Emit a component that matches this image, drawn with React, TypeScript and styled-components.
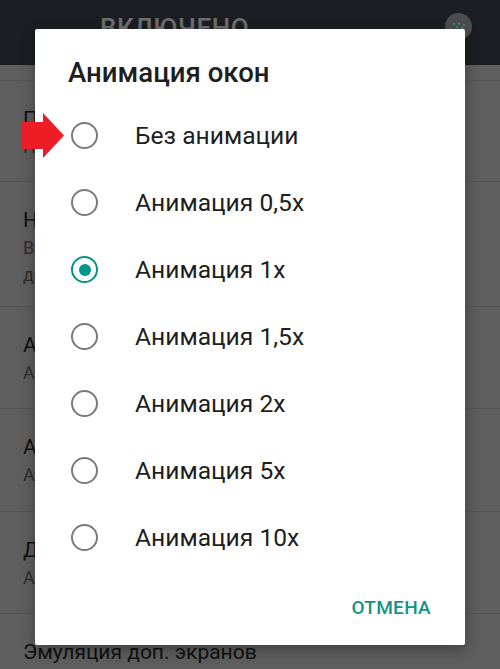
import styled, { createGlobalStyle } from 'styled-components';

const GlobalStyle = createGlobalStyle`
  html, body {
    margin: 0;
    padding: 0;
    background: #5e5e5e;
    font-family: Roboto, "Noto Sans", sans-serif;
  }
`;

const Screen = styled.div`
  position: relative;
  width: 500px;
  height: 669px;
  overflow: hidden;
  background: #5e5e5e;
`;

const TopBar = styled.div`
  height: 65px;
  background: #1b1f23;
  display: flex;
  align-items: flex-start;
  justify-content: space-between;
  padding: 0 28px 0 100px;
  box-sizing: border-box;
`;

const BarTitle = styled.div`
  color: #6e6e6e;
  font-size: 26px;
  font-weight: 500;
  letter-spacing: 0.6px;
  margin-top: 13px;
`;

const Toggle = styled.div`
  width: 27px;
  height: 27px;
  margin-top: 13px;
  border-radius: 50%;
  background: #4b4d4f;
  display: flex;
  align-items: center;
  justify-content: center;
`;

const SubHeader = styled.div`
  height: 15px;
  border-bottom: 1px solid #575757;
`;

const Item = styled.div<{ h: number }>`
  height: ${p => p.h}px;
  box-sizing: border-box;
  border-bottom: 1px solid #555;
  padding: 24px 0 0 23px;
`;

const ItemTitle = styled.div`
  color: #111;
  font-size: 21px;
  line-height: 28px;
`;

const ItemSub = styled.div`
  color: #2e2e2e;
  font-size: 18px;
  line-height: 27px;
`;

const Dialog = styled.div`
  position: absolute;
  left: 35px;
  top: 29px;
  width: 430px;
  height: 616px;
  background: #fff;
  border-radius: 2px;
  box-shadow: 0 4px 14px rgba(0, 0, 0, 0.35);
  box-sizing: border-box;
  padding: 26px 0 0 0;
  display: flex;
  flex-direction: column;
`;

const DialogTitle = styled.div`
  font-size: 27.6px;
  font-weight: 500;
  color: #1e1e1e;
  padding-left: 33px;
  line-height: 36px;
`;

const Options = styled.div`
  display: flex;
  flex-direction: column;
  margin-top: 11px;
`;

const Option = styled.label`
  display: flex;
  align-items: center;
  height: 67px;
  padding-left: 36px;
  font-size: 24.6px;
  color: #1e1e1e;
  cursor: pointer;
`;

const Radio = styled.span<{ checked?: boolean }>`
  width: 27px;
  height: 27px;
  box-sizing: border-box;
  border-radius: 50%;
  border: 2.5px solid ${p => (p.checked ? '#009688' : '#7a7a7a')};
  display: flex;
  align-items: center;
  justify-content: center;
  margin-right: 37px;
  flex-shrink: 0;
  &::after {
    content: '';
    width: 12px;
    height: 12px;
    border-radius: 50%;
    background: #009688;
    display: ${p => (p.checked ? 'block' : 'none')};
  }
`;

const Actions = styled.div`
  margin-top: auto;
  display: flex;
  justify-content: flex-end;
  padding: 0 34px 26px 0;
`;

const TextButton = styled.button`
  border: none;
  background: none;
  padding: 0;
  font-family: inherit;
  font-size: 19px;
  font-weight: 500;
  color: #129486;
  letter-spacing: 0.3px;
`;

const Arrow = styled.svg`
  position: absolute;
  left: 22px;
  top: 113px;
`;

const options = [
  'Без анимации',
  'Анимация 0,5x',
  'Анимация 1x',
  'Анимация 1,5x',
  'Анимация 2x',
  'Анимация 5x',
  'Анимация 10x',
];

export default function App() {
  return (
    <Screen>
      <GlobalStyle />
      <TopBar>
        <BarTitle>ВКЛЮЧЕНО</BarTitle>
        <Toggle>
          <svg width="14" height="10" viewBox="0 0 14 10">
            <g fill="#1fa08e">
              <circle cx="2" cy="2" r="1" />
              <circle cx="7" cy="1.5" r="1" />
              <circle cx="12" cy="3" r="1" />
              <circle cx="5" cy="5" r="1" />
              <circle cx="10" cy="6" r="1" />
            </g>
          </svg>
        </Toggle>
      </TopBar>
      <SubHeader />
      <Item h={101}>
        <ItemTitle>Пароль</ItemTitle>
        <ItemSub>Пароль не задан</ItemSub>
      </Item>
      <Item h={125}>
        <ItemTitle>Не выключать экран</ItemTitle>
        <ItemSub>Во время зарядки экран будет</ItemSub>
        <ItemSub>держаться включённым</ItemSub>
      </Item>
      <Item h={102}>
        <ItemTitle>Анимация окон</ItemTitle>
        <ItemSub>Анимация 1x</ItemSub>
      </Item>
      <Item h={103}>
        <ItemTitle>Анимация переходов</ItemTitle>
        <ItemSub>Анимация 1x</ItemSub>
      </Item>
      <Item h={102}>
        <ItemTitle>Длительность анимации</ItemTitle>
        <ItemSub>Анимация 1x</ItemSub>
      </Item>
      <Item h={60}>
        <ItemTitle>Эмуляция доп. экранов</ItemTitle>
      </Item>

      <Dialog>
        <DialogTitle>Анимация окон</DialogTitle>
        <Options>
          {options.map((o, i) => (
            <Option key={o}>
              <Radio checked={i === 2} />
              {o}
            </Option>
          ))}
        </Options>
        <Actions>
          <TextButton>ОТМЕНА</TextButton>
        </Actions>
      </Dialog>

      <Arrow width="42" height="45" viewBox="0 0 42 45">
        <path d="M0 9 H21 V0 L42 22.5 L21 45 V36 H0 Z" fill="#ee1c25" />
      </Arrow>
    </Screen>
  );
}
